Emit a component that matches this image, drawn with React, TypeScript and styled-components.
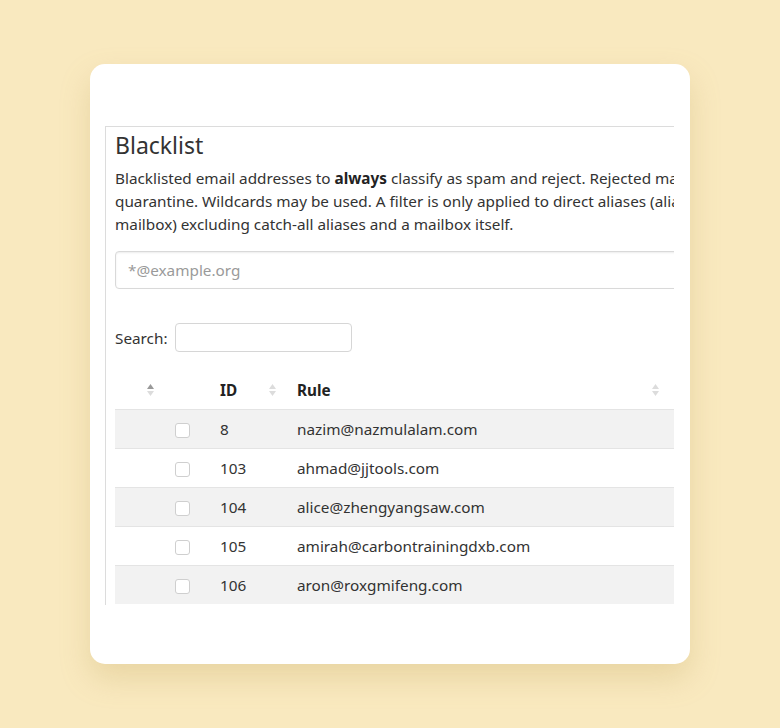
import React from "react";
import styled, { createGlobalStyle } from "styled-components";

const Global = createGlobalStyle`
  html, body { margin: 0; padding: 0; }
  body {
    background: #f9e9bf;
    font-family: "Noto Sans", "Open Sans", sans-serif;
    color: #333;
  }
`;

const Page = styled.div`
  width: 780px;
  height: 728px;
  display: flex;
  align-items: center;
  justify-content: center;
`;

const Card = styled.div`
  width: 600px;
  height: 600px;
  box-sizing: border-box;
  background: #fff;
  border-radius: 15px;
  box-shadow: 0 14px 30px rgba(190, 160, 90, 0.28);
  padding: 62px 15px 0 15px;
`;

const Clip = styled.div`
  width: 569px;
  height: 479px;
  overflow: hidden;
`;

const Panel = styled.div`
  width: 800px;
  min-height: 479px;
  box-sizing: border-box;
  border-top: 1px solid #dcdcdc;
  border-left: 1px solid #dcdcdc;
  padding: 0 0 0 9px;
`;

const Title = styled.h3`
  margin: 3px 0 0 0;
  font-size: 23px;
  font-weight: 400;
  line-height: 30px;
  color: #333;
`;

const Text = styled.p`
  margin: 7px 0 0 0;
  width: 770px;
  font-size: 15.3px;
  line-height: 23px;
  color: #333;
  b { font-weight: 700; color: #222; }
`;

const RuleInput = styled.input`
  display: block;
  box-sizing: border-box;
  margin-top: 15px;
  width: 770px;
  height: 38px;
  padding: 6px 12px;
  font-family: inherit;
  font-size: 15.3px;
  color: #333;
  border: 1px solid #d9d9d9;
  border-radius: 4px;
  box-shadow: inset 0 1px 2px rgba(0, 0, 0, 0.075);
  outline: none;
  &::placeholder { color: #9a9a9a; }
`;

const SearchRow = styled.label`
  display: flex;
  align-items: center;
  gap: 7px;
  margin-top: 34px;
  font-size: 15.3px;
  color: #333;
`;

const SearchInput = styled.input`
  box-sizing: border-box;
  width: 177px;
  height: 29px;
  border: 1px solid #d6d6d6;
  border-radius: 4px;
  outline: none;
  font-family: inherit;
  font-size: 14px;
`;

const Table = styled.table`
  margin-top: 18px;
  border-collapse: collapse;
  table-layout: fixed;
  width: 765px;
  font-size: 15.3px;
`;

const Th = styled.th<{ $w: number }>`
  position: relative;
  width: ${(p) => p.$w}px;
  box-sizing: border-box;
  text-align: left;
  font-weight: 700;
  color: #222;
  padding: 9px 10px 7px 10px;
  height: 39px;
  line-height: 22px;
`;

const SortIcon = styled.svg`
  position: absolute;
  right: 10px;
  top: 13px;
`;

const Tr = styled.tr<{ $odd: boolean }>`
  background: ${(p) => (p.$odd ? "#f2f2f2" : "#fff")};
  border-top: 1px solid #e4e4e4;
`;

const Td = styled.td`
  padding: 8px 10px;
  height: 39px;
  box-sizing: border-box;
  line-height: 22px;
  color: #333;
  white-space: nowrap;
  overflow: hidden;
`;

const Check = styled.span`
  display: block;
  width: 15px;
  height: 15px;
  margin-top: 4px;
  box-sizing: border-box;
  border: 1px solid #cfcfcf;
  border-radius: 3px;
  background: #fff;
`;

const Sort = ({ active }: { active?: boolean }) => (
  <SortIcon width="9" height="14" viewBox="0 0 9 14">
    <path d="M4.5 1 L8 6 L1 6 Z" fill={active ? "#999" : "#dcdcdc"} />
    <path d="M4.5 13 L8 8 L1 8 Z" fill="#dcdcdc" />
  </SortIcon>
);

const rows = [
  { id: 8, rule: "nazim@nazmulalam.com" },
  { id: 103, rule: "ahmad@jjtools.com" },
  { id: 104, rule: "alice@zhengyangsaw.com" },
  { id: 105, rule: "amirah@carbontrainingdxb.com" },
  { id: 106, rule: "aron@roxgmifeng.com" },
];

export default function App() {
  return (
    <>
      <Global />
      <Page>
        <Card>
          <Clip>
            <Panel>
              <Title>Blacklist</Title>
              <Text>
                Blacklisted email addresses to <b>always</b> classify as spam and reject. Rejected
                mails will <b>not</b> be copied to quarantine. Wildcards may be used. A filter is
                only applied to direct aliases (aliases with a single target mailbox) excluding
                catch-all aliases and a mailbox itself.
              </Text>
              <RuleInput placeholder="*@example.org" />
              <SearchRow>
                Search:
                <SearchInput type="search" />
              </SearchRow>
              <Table>
                <thead>
                  <tr>
                    <Th $w={50}>
                      <Sort active />
                    </Th>
                    <Th $w={45}></Th>
                    <Th $w={77}>
                      ID
                      <Sort />
                    </Th>
                    <Th $w={383}>
                      Rule
                      <Sort />
                    </Th>
                    <Th $w={210}>Action</Th>
                  </tr>
                </thead>
                <tbody>
                  {rows.map((r, i) => (
                    <Tr key={r.id} $odd={i % 2 === 0}>
                      <Td></Td>
                      <Td>
                        <Check />
                      </Td>
                      <Td>{r.id}</Td>
                      <Td>{r.rule}</Td>
                      <Td></Td>
                    </Tr>
                  ))}
                </tbody>
              </Table>
            </Panel>
          </Clip>
        </Card>
      </Page>
    </>
  );
}
